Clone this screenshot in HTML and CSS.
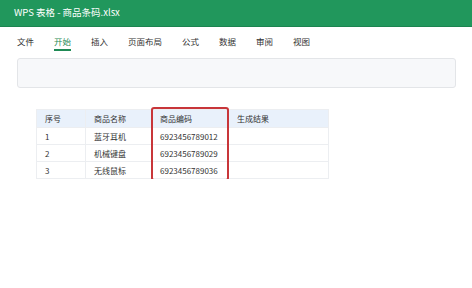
FILE: index.html
```html
<!DOCTYPE html>
<html lang="zh-CN">
<head>
    <meta charset="UTF-8">
    <title>WPS 表格 - 商品条码.xlsx</title>
    <link rel="stylesheet" href="styles.css">
</head>
<body>
    <div class="titlebar">WPS 表格 - 商品条码.xlsx</div>
    <div class="tabs">
        <span class="tab">文件</span>
        <span class="tab active">开始</span>
        <span class="tab">插入</span>
        <span class="tab">页面布局</span>
        <span class="tab">公式</span>
        <span class="tab">数据</span>
        <span class="tab">审阅</span>
        <span class="tab">视图</span>
    </div>
    <div class="toolbar"></div>
    <div class="sheet">
        <table class="grid">
            <tr>
                <th class="c1">序号</th>
                <th class="c2">商品名称</th>
                <th class="c3">商品编码</th>
                <th class="c4">生成结果</th>
            </tr>
            <tr>
                <td>1</td>
                <td>蓝牙耳机</td>
                <td>6923456789012</td>
                <td></td>
            </tr>
            <tr>
                <td>2</td>
                <td>机械键盘</td>
                <td>6923456789029</td>
                <td></td>
            </tr>
            <tr>
                <td>3</td>
                <td>无线鼠标</td>
                <td>6923456789036</td>
                <td></td>
            </tr>
        </table>
        <div class="highlight"></div>
    </div>
</body>
</html>
```

FILE: styles.css
```css
body {
    margin: 0;
    font-family: "Noto Sans CJK SC", "Noto Sans", sans-serif;
    background-color: #fff;
    color: #333;
}

.titlebar {
    height: 26px;
    background-color: #21975c;
    border-bottom: 1px solid #1c8450;
    color: #fff;
    font-size: 9.5px;
    line-height: 25px;
    padding-left: 14px;
}

.tabs {
    display: flex;
    gap: 20px;
    padding: 7px 17px 0;
    height: 22px;
}

.tab {
    font-size: 8.5px;
    line-height: 15px;
    height: 15px;
    color: #333;
}

.tab.active {
    color: #1f8a55;
    border-bottom: 2px solid #1f8a55;
}

.toolbar {
    margin: 2px 16px 0 17px;
    height: 28px;
    background-color: #f7f8fa;
    border: 1px solid #e3e5e8;
    border-radius: 3px;
}

.sheet {
    position: relative;
    margin: 21px 0 0 36px;
    width: 293px;
}

.grid {
    border-collapse: collapse;
    width: 293px;
    font-size: 8px;
}

.grid th,
.grid td {
    border: 1px solid #eceef1;
    height: 16px;
    padding: 0 8px;
    text-align: left;
    font-weight: normal;
    color: #333;
}

.grid th {
    background-color: #e9f1fb;
    height: 17px;
}

.c1 { width: 32px; }
.c2 { width: 49px; }
.c3 { width: 60px; }

.highlight {
    position: absolute;
    left: 115px;
    top: -2px;
    width: 74px;
    height: 70px;
    border: 2px solid #c8363a;
    border-radius: 3px;
}
```
